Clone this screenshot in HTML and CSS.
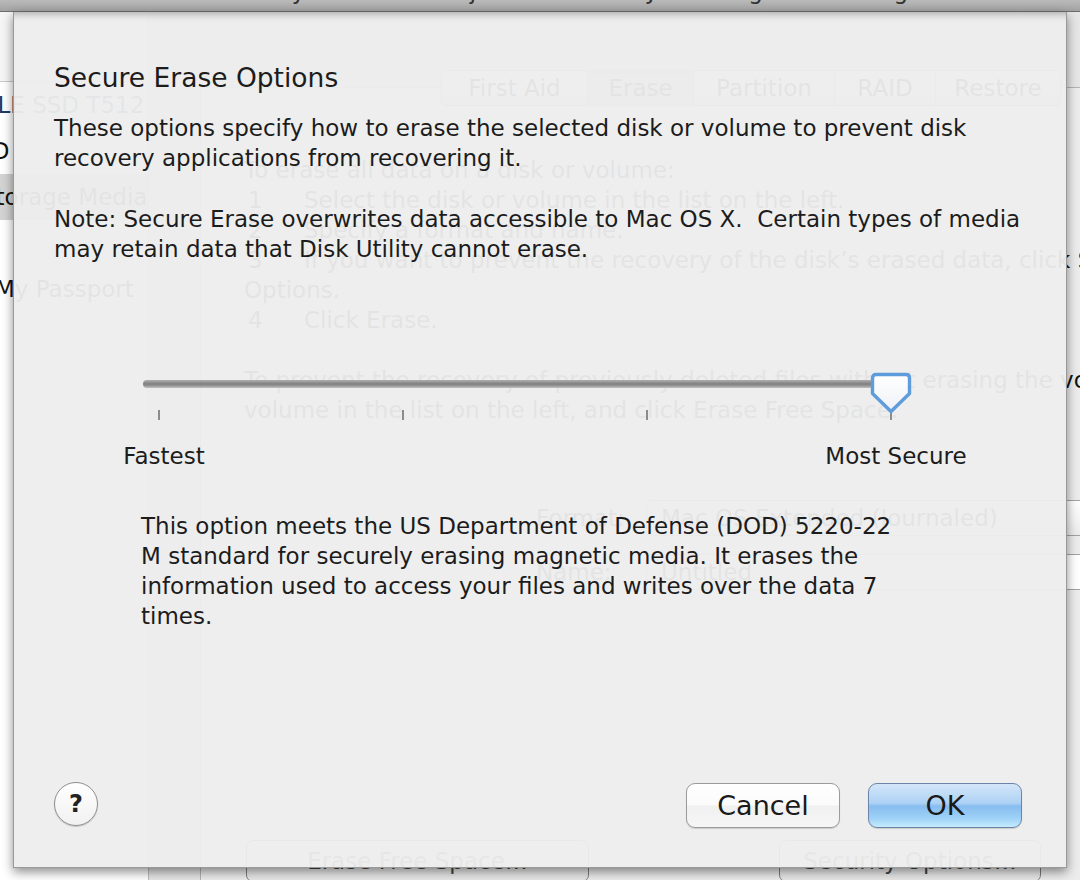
FILE: index.html
```html
<!DOCTYPE html>
<html lang="en">
<head>
<meta charset="utf-8">
<title>Disk Utility – Secure Erase Options</title>
<link rel="stylesheet" href="styles.css">
</head>
<body>
<div class="desk">
  <header class="toolbar">
    <span class="tb-label tb-verify">Verify</span>
    <span class="tb-label tb-eject">Eject</span>
    <span class="tb-label tb-journal">Enable Journaling</span>
    <span class="tb-label tb-image">New Image</span>
  </header>

  <div class="window">
    <aside class="sidebar">
      <div class="sb-head"></div>
      <ul class="sb-list">
        <li class="sb-row"><span class="sb-text sb-disk">APPLE SSD T512</span></li>
        <li class="sb-row"><span class="sb-text sb-vol">Macintosh HD</span></li>
        <li class="sb-row is-selected"><span class="sb-text sb-media">Storage Media</span></li>
        <li class="sb-row sb-later"><span class="sb-text sb-ext">My Passport</span></li>
      </ul>
    </aside>

    <main class="main">
      <div class="tabview">
        <nav class="tabs">
          <span class="tab tab-aid">First Aid</span>
          <span class="tab tab-erase is-active">Erase</span>
          <span class="tab tab-part">Partition</span>
          <span class="tab tab-raid">RAID</span>
          <span class="tab tab-restore">Restore</span>
        </nav>
        <div class="tab-body">
          <p class="help-line">To erase all data on a disk or volume:</p>
          <p class="help-line"><span class="step-num">1</span>Select the disk or volume in the list on the left.</p>
          <p class="help-line"><span class="step-num">2</span>Specify a format and name.</p>
          <p class="help-line"><span class="step-num">3</span>If you want to prevent the recovery of the disk’s erased data, click Security</p>
          <p class="help-line">Options.</p>
          <p class="help-line"><span class="step-num">4</span>Click Erase.</p>
          <p class="help-line help-gap">To prevent the recovery of previously deleted files without erasing the volume, select the</p>
          <p class="help-line">volume in the list on the left, and click Erase Free Space.</p>

          <div class="form-row form-format">
            <span class="form-label">Format:</span>
            <span class="popup">Mac OS Extended (Journaled)</span>
          </div>
          <div class="form-row form-name">
            <span class="form-label">Name:</span>
            <span class="field">Untitled</span>
          </div>

          <div class="actions">
            <span class="ghost-btn ghost-free">Erase Free Space…</span>
            <span class="ghost-btn ghost-sec">Security Options…</span>
          </div>
        </div>
      </div>
    </main>
  </div>

  <section class="sheet">
    <h1 class="sheet-title">Secure Erase Options</h1>
    <p class="sheet-text sheet-intro">These options specify how to erase the selected disk or volume to prevent disk<br>recovery applications from recovering it.</p>
    <p class="sheet-text sheet-note">Note: Secure Erase overwrites data accessible to Mac OS X.&nbsp; Certain types of media<br>may retain data that Disk Utility cannot erase.</p>

    <div class="slider">
      <div class="track-wrap">
        <div class="track"></div>
        <svg class="thumb" width="42" height="42" viewBox="0 0 42 42" aria-hidden="true">
          <defs>
            <linearGradient id="thumbFill" x1="0" y1="0" x2="0" y2="1">
              <stop offset="0" stop-color="#ffffff"/>
              <stop offset="1" stop-color="#eef1f5"/>
            </linearGradient>
          </defs>
          <path d="M6 2.5 H36 Q39.5 2.5 39.5 6 V21.5 L21 39.5 L2.5 21.5 V6 Q2.5 2.5 6 2.5 Z" fill="url(#thumbFill)" stroke="#5f9cdc" stroke-width="3.4" stroke-linejoin="round"/>
        </svg>
      </div>
      <div class="ticks">
        <span class="tick"></span><span class="tick"></span><span class="tick"></span><span class="tick"></span>
      </div>
      <div class="slider-labels">
        <span class="slider-label label-first">Fastest</span>
        <span class="slider-label label-last">Most Secure</span>
      </div>
    </div>

    <p class="sheet-text sheet-desc">This option meets the US Department of Defense (DOD) 5220-22<br>M standard for securely erasing magnetic media. It erases the<br>information used to access your files and writes over the data 7<br>times.</p>

    <footer class="sheet-footer">
      <span class="help-btn">?</span>
      <span class="btn btn-cancel">Cancel</span>
      <span class="btn btn-ok">OK</span>
    </footer>
  </section>
</div>
</body>
</html>
```

FILE: styles.css
```css
html, body {
  margin: 0;
  padding: 0;
}

.desk {
  position: relative;
  width: 1080px;
  height: 880px;
  overflow: hidden;
  background: #e9e9e9;
  font-family: "DejaVu Sans", "Liberation Sans", sans-serif;
  font-size: 23px;
  color: #111;
}

/* window toolbar, mostly scrolled above the view */
.toolbar {
  height: 11px;
  border-bottom: 1px solid #6d6d6d;
  background: linear-gradient(#bababa, #a2a2a2);
  display: flex;
  align-items: flex-start;
  overflow: hidden;
  color: #333;
}

.tb-label {
  line-height: 20px;
  margin-top: -19px;
  white-space: nowrap;
}

.tb-verify { margin-left: 240px; }
.tb-eject { margin-left: 150px; }
.tb-journal { margin-left: 50px; }
.tb-image { margin-left: 30px; }

/* main window */
.window {
  display: flex;
  height: 868px;
}

.sidebar {
  flex: none;
  width: 148px;
  background: #fff;
  border-right: 1px solid #bdbdbd;
}

.sb-head {
  height: 69px;
  background: #f5f5f5;
  border-bottom: 1px solid #c8c8c8;
}

.sb-list {
  list-style: none;
  margin: 0;
  padding: 0;
}

.sb-row {
  height: 46px;
  display: flex;
  align-items: center;
  white-space: nowrap;
  overflow: hidden;
}

.sb-row.is-selected {
  background: #d3d3d3;
}

.sb-later {
  margin-top: 46px;
}

.sb-text { flex: none; }
.sb-disk { margin-left: -46px; color: #1f3b66; }
.sb-vol { margin-left: -150px; }
.sb-media { margin-left: -19px; }
.sb-ext { margin-left: -5px; }

.main {
  flex: 1;
  min-width: 0;
  padding: 75px 0 0 51px;
  background: #e6e6e6;
}

.tabview {
  width: 900px;
  height: 800px;
  border: 1px solid #b4b4b4;
  background: #ececec;
}

.tabs {
  display: flex;
  width: fit-content;
  height: 34px;
  margin: -18px 0 0 240px;
  border: 1px solid #9c9c9c;
  border-radius: 5px;
  background: linear-gradient(#fdfdfd, #e4e4e4);
  overflow: hidden;
}

.tab {
  display: flex;
  align-items: center;
  justify-content: center;
  border-left: 1px solid #aaa;
  white-space: nowrap;
}

.tab:first-child { border-left: none; }
.tab-aid { width: 145px; }
.tab-erase { width: 105px; }
.tab-part { width: 140px; }
.tab-raid { width: 100px; }
.tab-restore { width: 124px; }

.tab.is-active {
  background: linear-gradient(#bdbdbd, #d6d6d6);
}

.tab-body {
  padding: 49px 0 0 43px;
}

.help-line {
  margin: 0;
  line-height: 30px;
  white-space: nowrap;
}

.help-gap {
  margin-top: 30px;
}

.step-num {
  display: inline-block;
  width: 56px;
  padding-left: 4px;
}

.form-row {
  display: flex;
  align-items: center;
  height: 36px;
  margin-left: 292px;
}

.form-format { margin-top: 75px; }
.form-name { margin-top: 18px; }

.form-label {
  width: 110px;
  flex: none;
}

.popup,
.field {
  flex: none;
  box-sizing: border-box;
  width: 470px;
  height: 36px;
  display: flex;
  align-items: center;
  padding-left: 14px;
  border: 1px solid #a3a3a3;
  white-space: nowrap;
}

.popup {
  border-radius: 5px;
  background: linear-gradient(#ffffff, #ececec);
}

.field {
  background: #fff;
}

.actions {
  display: flex;
  margin: 250px 0 0 2px;
  gap: 190px;
}

.ghost-btn {
  box-sizing: border-box;
  height: 42px;
  display: flex;
  align-items: center;
  justify-content: center;
  border: 1px solid #7f7f7f;
  border-radius: 7px;
  background: linear-gradient(#ffffff, #e6e6e6);
  white-space: nowrap;
  color: #444;
}

.ghost-free { width: 343px; }
.ghost-sec { width: 262px; }

/* Secure Erase sheet */
.sheet {
  position: absolute;
  left: 13px;
  top: 12px;
  width: 1054px;
  height: 856px;
  box-sizing: border-box;
  display: flex;
  flex-direction: column;
  padding: 51px 44px 39px 23px;
  background: rgba(237, 237, 237, 0.958);
  border: 1px solid #999;
  border-top: none;
  box-shadow: 0 4px 10px rgba(0, 0, 0, 0.45), inset 0 10px 9px -9px rgba(0, 0, 0, 0.35);
  color: #1c1c1c;
}

.sheet-title {
  margin: 0 0 0 17px;
  font-size: 26.5px;
  font-weight: normal;
  line-height: 30px;
  white-space: nowrap;
}

.sheet-text {
  margin: 0 0 0 17px;
  line-height: 30px;
  white-space: nowrap;
}

.sheet-intro { margin-top: 20px; }
.sheet-note { margin-top: 31px; }

.slider {
  width: 976px;
  margin-top: 108px;
}

.track-wrap {
  position: relative;
  margin: 0 106px;
  padding-top: 8px;
}

.track {
  height: 8px;
  border-radius: 4px;
  background: linear-gradient(#b0b0b0, #7f7f7f 50%, #9a9a9a 75%, #c2c2c2);
}

.thumb {
  position: absolute;
  top: 0;
  left: 727px;
}

.ticks,
.slider-labels {
  display: grid;
  grid-template-columns: repeat(4, 244px);
}

.ticks {
  margin-top: 22px;
}

.tick {
  justify-self: center;
  width: 2px;
  height: 10px;
  background: #8c8c8c;
}

.slider-labels {
  margin: 21px 0 0 5px;
  line-height: 30px;
}

.slider-label {
  text-align: center;
  white-space: nowrap;
}

.label-first { grid-column: 1; }
.label-last { grid-column: 4; }

.sheet-desc {
  margin: 40px 0 0 104px;
}

.sheet-footer {
  margin-top: auto;
  display: flex;
  align-items: flex-end;
  gap: 28px;
  height: 46px;
  padding-left: 17px;
}

.help-btn {
  box-sizing: border-box;
  width: 44px;
  height: 44px;
  margin: 0 auto 2px 0;
  border-radius: 50%;
  border: 1.5px solid #8e8e8e;
  background: linear-gradient(#ffffff, #f1f1f1);
  box-shadow: 0 1px 1px rgba(0, 0, 0, 0.18);
  display: flex;
  align-items: center;
  justify-content: center;
  font-weight: bold;
  font-size: 24px;
  color: #222;
}

.btn {
  box-sizing: border-box;
  width: 154px;
  height: 45px;
  border-radius: 9px;
  display: flex;
  align-items: center;
  justify-content: center;
  font-size: 27px;
  color: #1a1a1a;
  box-shadow: 0 1px 1px rgba(0, 0, 0, 0.15);
}

.btn-cancel {
  border: 1.5px solid #9b9b9b;
  background: linear-gradient(#ffffff, #fbfbfb 48%, #f0f0f0 52%, #f6f6f6);
}

.btn-ok {
  border: 1.5px solid #6d84a9;
  background: linear-gradient(#d3e6f8, #aed2f4 44%, #88bdf0 52%, #9ed2f7 80%, #c4ecfd);
}
```
